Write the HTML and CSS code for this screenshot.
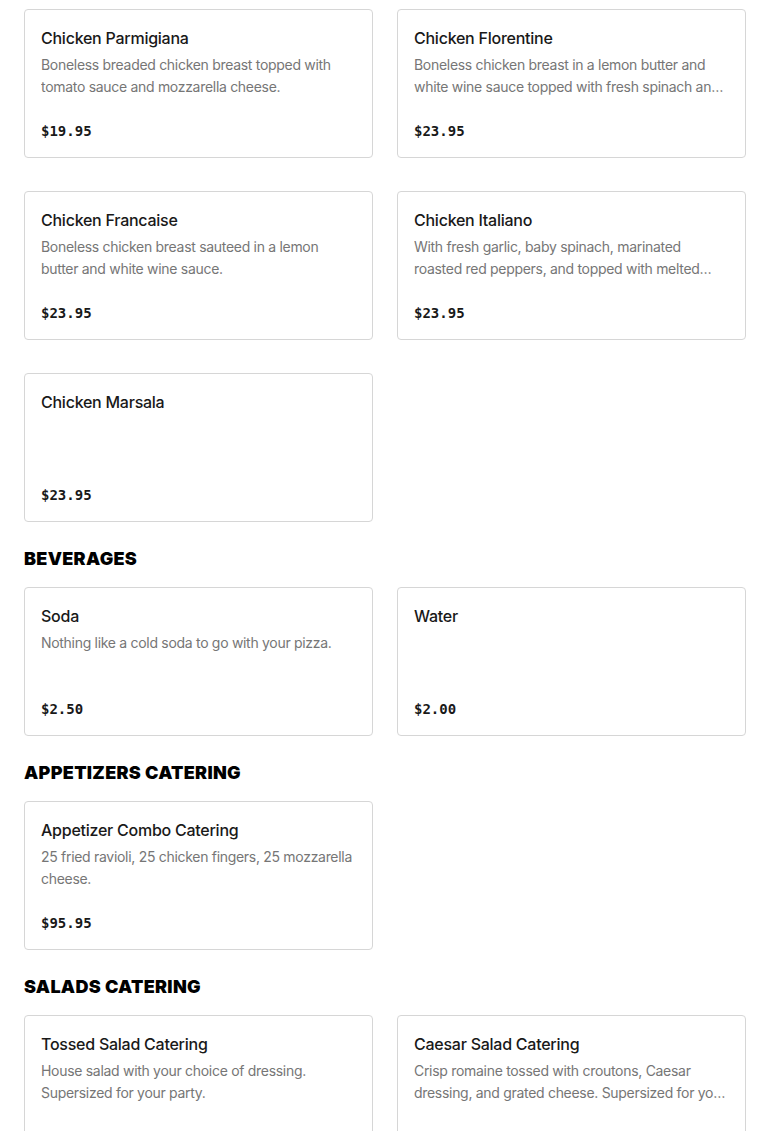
FILE: index.html
```html
<!DOCTYPE html>
<html lang="en">
<head>
<meta charset="utf-8">
<title>Menu</title>
<link rel="stylesheet" href="styles.css">
</head>
<body>
<main class="menu">
  <section class="section first">
    <div class="grid">
      <article class="card">
        <h3 class="card-title">Chicken Parmigiana</h3>
        <p class="card-desc">Boneless breaded chicken breast topped with tomato sauce and mozzarella cheese.</p>
        <p class="card-price">$19.95</p>
      </article>
      <article class="card">
        <h3 class="card-title">Chicken Florentine</h3>
        <p class="card-desc">Boneless chicken breast in a lemon butter and white wine sauce topped with fresh spinach and mozzarella cheese.</p>
        <p class="card-price">$23.95</p>
      </article>
      <article class="card">
        <h3 class="card-title">Chicken Francaise</h3>
        <p class="card-desc">Boneless chicken breast sauteed in a lemon butter and white wine sauce.</p>
        <p class="card-price">$23.95</p>
      </article>
      <article class="card">
        <h3 class="card-title">Chicken Italiano</h3>
        <p class="card-desc">With fresh garlic, baby spinach, marinated roasted red peppers, and topped with melted mozzarella cheese.</p>
        <p class="card-price">$23.95</p>
      </article>
      <article class="card">
        <h3 class="card-title">Chicken Marsala</h3>
        <p class="card-price">$23.95</p>
      </article>
    </div>
  </section>

  <section class="section">
    <h2 class="section-title">BEVERAGES</h2>
    <div class="grid">
      <article class="card">
        <h3 class="card-title">Soda</h3>
        <p class="card-desc">Nothing like a cold soda to go with your pizza.</p>
        <p class="card-price">$2.50</p>
      </article>
      <article class="card">
        <h3 class="card-title">Water</h3>
        <p class="card-price">$2.00</p>
      </article>
    </div>
  </section>

  <section class="section">
    <h2 class="section-title">APPETIZERS CATERING</h2>
    <div class="grid">
      <article class="card">
        <h3 class="card-title">Appetizer Combo Catering</h3>
        <p class="card-desc">25 fried ravioli, 25 chicken fingers, 25 mozzarella cheese.</p>
        <p class="card-price">$95.95</p>
      </article>
    </div>
  </section>

  <section class="section">
    <h2 class="section-title">SALADS CATERING</h2>
    <div class="grid">
      <article class="card">
        <h3 class="card-title">Tossed Salad Catering</h3>
        <p class="card-desc">House salad with your choice of dressing. Supersized for your party.</p>
        <p class="card-price">$39.95</p>
      </article>
      <article class="card">
        <h3 class="card-title">Caesar Salad Catering</h3>
        <p class="card-desc">Crisp romaine tossed with croutons, Caesar dressing, and grated cheese. Supersized for your party.</p>
        <p class="card-price">$49.95</p>
      </article>
    </div>
  </section>
</main>
</body>
</html>
```

FILE: styles.css
```css
* {
  box-sizing: border-box;
}

html, body {
  margin: 0;
  padding: 0;
  background: #ffffff;
}

body {
  font-family: Inter, "Noto Sans", Roboto, sans-serif;
  color: #191919;
}

.menu {
  padding: 9px 24px 40px;
}

.section-title {
  margin: 25px 0 16px;
  font-size: 18px;
  line-height: 24px;
  font-weight: 900;
  color: #000000;
  letter-spacing: 0.3px;
}

.grid {
  display: grid;
  grid-template-columns: 1fr 1fr;
  column-gap: 24px;
  row-gap: 33px;
}

.card {
  display: flex;
  flex-direction: column;
  height: 149px;
  padding: 16px;
  border: 1px solid #d6d6d6;
  border-radius: 4px;
  background: #ffffff;
}

.card-title {
  margin: 0;
  font-size: 16px;
  line-height: 24px;
  font-weight: 500;
  letter-spacing: -0.25px;
  color: #191919;
}

.card-desc {
  margin: 4px 0 0;
  font-size: 14px;
  line-height: 22px;
  font-weight: 400;
  letter-spacing: -0.3px;
  color: #767676;
  display: -webkit-box;
  -webkit-line-clamp: 2;
  -webkit-box-orient: vertical;
  overflow: hidden;
}

.card-price {
  margin: auto 0 0;
  font-family: "DejaVu Sans Mono", "Liberation Mono", monospace;
  font-size: 14px;
  line-height: 20px;
  font-weight: 700;
  color: #191919;
}
```
